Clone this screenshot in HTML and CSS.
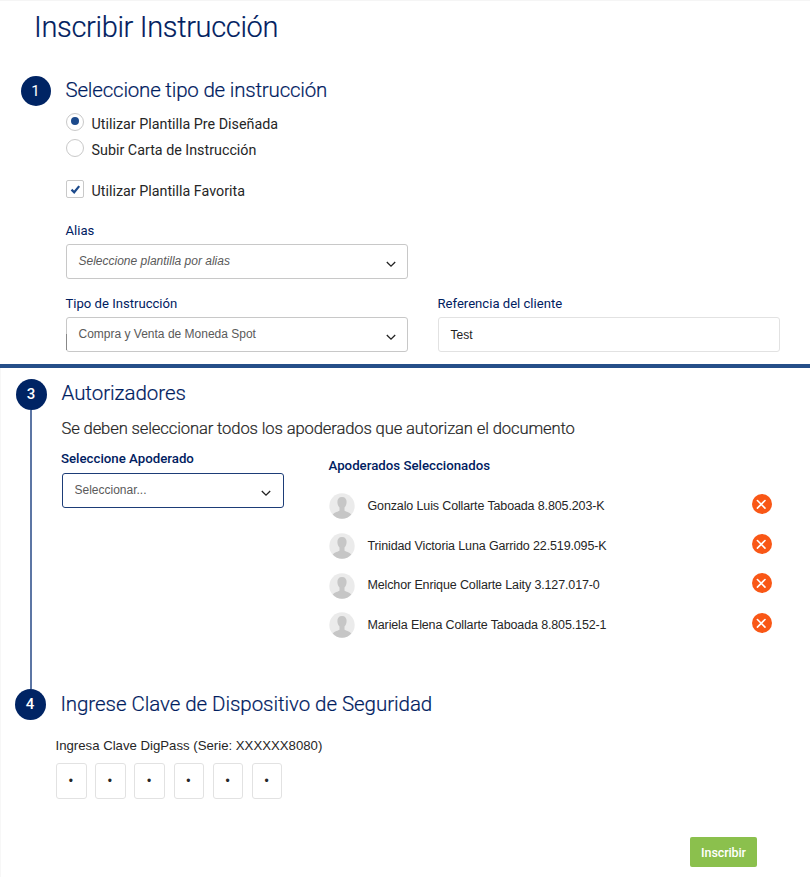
FILE: index.html
```html
<!DOCTYPE html>
<html lang="es">
<head>
<meta charset="utf-8">
<title>Inscribir Instrucción</title>
<link rel="stylesheet" href="styles.css">
</head>
<body>
<svg width="0" height="0" class="defs">
  <symbol id="chevron" viewBox="0 0 10 7"><path d="M.8 1 5 5.2 9.2 1" fill="none" stroke="currentColor" stroke-width="1.3"/></symbol>
  <symbol id="avatar" viewBox="0 0 26 26"><circle cx="13" cy="13" r="12.7" fill="#ebebeb"/><path d="M13 4c-3.200 0-4.600 2-4.600 5 0 2.400.9 4.300 2.100 5.600v2.800c-1 1.300-5 1.500-6.800 4A12.700 12.700 0 0 0 13 25.700a12.700 12.700 0 0 0 9.300-4.300c-1.800-2.500-5.800-2.700-6.800-4v-2.800c1.200-1.300 2.100-3.200 2.100-5.600 0-3-1.400-5-4.600-5z" fill="#c6c6c6"/></symbol>
  <symbol id="remove" viewBox="0 0 20 20"><circle cx="10" cy="10" r="10" fill="#f95716"/><path d="m5.400 6.500 7.600 7.600m0-7.600-7.600 7.600" stroke="#fff" stroke-width="1.600" stroke-linecap="round"/></symbol>
</svg>
<section class="top">
  <h1>Inscribir Instrucción</h1>
  <div class="step">
    <div class="num">1</div>
    <div class="content">
      <h2 class="tight">Seleccione tipo de instrucción</h2>
      <div class="options">
        <label class="option"><i class="radio on"></i><span>Utilizar Plantilla Pre Diseñada</span></label>
        <label class="option"><i class="radio"></i><span>Subir Carta de Instrucción</span></label>
        <label class="option fav"><i class="check"><svg viewBox="0 0 18 18"><path d="m4.500 8.600 2.700 2.700 5-6.200" fill="none" stroke="#1c4a8c" stroke-width="2.200"/></svg></i><span>Utilizar Plantilla Favorita</span></label>
      </div>
      <div class="label">Alias</div>
      <div class="select"><em>Seleccione plantilla por alias</em><svg class="chev"><use href="#chevron"/></svg></div>
      <div class="fields">
        <div>
          <div class="label">Tipo de Instrucción</div>
          <div class="select type"><span>Compra y Venta de Moneda Spot</span><svg class="chev"><use href="#chevron"/></svg></div>
        </div>
        <div>
          <div class="label">Referencia del cliente</div>
          <div class="input">Test</div>
        </div>
      </div>
    </div>
  </div>
</section>
<section class="bottom">
  <div class="step three">
    <div class="rail"><div class="num">3</div><div class="line"></div></div>
    <div class="content">
      <h2>Autorizadores</h2>
      <p class="intro">Se deben seleccionar todos los apoderados que autorizan el documento</p>
      <div class="cols">
        <div class="pick">
          <div class="label strong">Seleccione Apoderado</div>
          <div class="select active"><span>Seleccionar...</span><svg class="chev"><use href="#chevron"/></svg></div>
        </div>
        <div class="chosen">
          <div class="label strong">Apoderados Seleccionados</div>
          <ul>
            <li><svg class="avatar"><use href="#avatar"/></svg><span>Gonzalo Luis Collarte Taboada 8.805.203-K</span><svg class="remove"><use href="#remove"/></svg></li>
            <li><svg class="avatar"><use href="#avatar"/></svg><span>Trinidad Victoria Luna Garrido 22.519.095-K</span><svg class="remove"><use href="#remove"/></svg></li>
            <li><svg class="avatar"><use href="#avatar"/></svg><span>Melchor Enrique Collarte Laity 3.127.017-0</span><svg class="remove"><use href="#remove"/></svg></li>
            <li><svg class="avatar"><use href="#avatar"/></svg><span>Mariela Elena Collarte Taboada 8.805.152-1</span><svg class="remove"><use href="#remove"/></svg></li>
          </ul>
        </div>
      </div>
    </div>
  </div>
  <div class="step four">
    <div class="num">4</div>
    <h2>Ingrese Clave de Dispositivo de Seguridad</h2>
  </div>
  <div class="key">
    <div class="keylabel">Ingresa Clave DigPass (Serie: XXXXXX8080)</div>
    <div class="digits"><span>•</span><span>•</span><span>•</span><span>•</span><span>•</span><span>•</span></div>
  </div>
  <button class="submit">Inscribir</button>
</section>
</body>
</html>
```
FILE: styles.css
```css
* { box-sizing: border-box; }

body {
  margin: 0;
  width: 810px;
  height: 877px;
  background: #fff;
  font-family: Roboto, sans-serif;
  color: #262626;
  overflow: hidden;
}

.defs { position: absolute; }
h1, h2, p, ul { margin: 0; padding: 0; font-weight: 300; }
h1, h2, .intro { -webkit-text-stroke: 0.2px currentColor; }

.top { height: 364px; border-top: 1px solid #f5f5f5; padding-top: 6px; }
h1 {
  height: 69px;
  padding-left: 34px;
  font-size: 29px;
  line-height: 40px;
  letter-spacing: -0.33px;
  color: #00205f;
}
h2 { font-size: 20.5px; line-height: 28px; letter-spacing: -0.05px; color: #00205f; }
h2.tight { letter-spacing: -0.2px; margin-left: -0.5px; }

.step { display: flex; }
.num {
  flex: none;
  width: 30px;
  height: 30px;
  border-radius: 50%;
  background: #002464;
  color: #fff;
  font-size: 15px;
  line-height: 30px;
  text-align: center;
  text-indent: -1px;
}
.top .step { padding-left: 21px; }
.top .content { margin-left: 15px; flex: 1; }

.options { padding: 7px 0 18px; }
.option { display: flex; align-items: center; gap: 7.6px; height: 26px; font-size: 14.3px; }
.fav { margin-top: 15px; }
.radio, .check {
  display: grid;
  place-items: center;
  width: 18px;
  height: 18px;
  border: 1px solid #c9c9c9;
  border-radius: 50%;
  position: relative;
  top: -2px;
}
.radio.on::after {
  content: "";
  width: 8px;
  height: 8px;
  margin-bottom: 2px;
  border-radius: 50%;
  background: #1c4a8c;
}
.check { border-radius: 2px; }
.check svg { width: 18px; height: 18px; }

.label { margin-bottom: 4px; font-size: 13.1px; line-height: 18px; color: #00205f; text-indent: -0.5px; }
.select, .input {
  display: flex;
  align-items: center;
  justify-content: space-between;
  width: 342px;
  height: 35px;
  padding: 0 11.5px 1px 11.5px;
  border: 1px solid #c8c8c8;
  border-radius: 3px;
  font: 12px "Liberation Sans", sans-serif;
  color: #5a5a5a;
}
.input { border-color: #e2e2e2; color: #222; padding-bottom: 0; }
.type { position: relative; }
.type::before {
  content: "";
  position: absolute;
  left: -1px;
  top: 16px;
  width: 1px;
  height: 16px;
  background: #888;
}
.chev { width: 10px; height: 7px; margin-top: 7px; color: #222; }
.fields { display: flex; gap: 30px; margin-top: 16px; }

.bottom { height: 513px; border-top: 4px solid #254f89; background: linear-gradient(#f7f7f7, #f7f7f7) 0 0 / 1px 100% no-repeat; }
.three { height: 321px; padding: 11px 0 0 16px; }
.rail { display: flex; flex-direction: column; }
.line { flex: 1; width: 2px; margin-left: 14px; background: #5c76a4; }
.bottom .num { width: 31px; height: 31px; line-height: 31px; font-weight: 500; }
.three .content { padding: 0 0 0 14px; }
.three h2 { padding-left: 0.5px; }
.intro { margin-top: 9px; padding-left: 0.5px; font-size: 16.6px; line-height: 26px; letter-spacing: -0.13px; }
.strong { font-size: 13.25px; font-weight: 500; text-indent: 0; }
.cols { display: flex; gap: 45px; margin-top: 8px; }
.pick .select { width: 222px; margin-left: 1px; margin-top: 5px; }
.select.active { border-color: #1d3d77; padding-right: 12.5px; }
.chosen { padding-top: 7px; }
.chosen .label { margin: 0 0 11px; text-indent: -0.5px; }

ul { list-style: none; }
li {
  display: flex;
  align-items: center;
  width: 443px;
  height: 39.7px;
  font: 12.5px "Liberation Sans", sans-serif;
  letter-spacing: -0.13px;
}
li span { margin: 0 auto 0 12.5px; }
.avatar { width: 26px; height: 26px; margin-top: 1px; }
.remove { width: 20px; height: 20px; margin-bottom: 4px; }

.four { padding-left: 15px; }
.four h2 { margin-left: 14.4px; padding-top: 1px; }
.key { padding: 16px 0 0 55.5px; }
.keylabel { font: 13.2px/20px "Liberation Sans", sans-serif; }
.digits { display: flex; gap: 8.7px; margin: 7px 0 0 0.5px; }
.digits span {
  width: 30.5px;
  height: 36px;
  border: 1px solid #e2e2e2;
  border-radius: 3px;
  font: 12px/35px "Liberation Sans", sans-serif;
  text-align: center;
  text-indent: -1px;
}
.submit {
  display: block;
  width: 67px;
  height: 30px;
  margin: 38px 0 0 690px;
  padding: 0;
  border: 0;
  border-radius: 2px;
  background: #8bc04d;
  color: #fff;
  font: 500 12.5px Roboto, sans-serif;
  letter-spacing: -0.1px;
}
```
